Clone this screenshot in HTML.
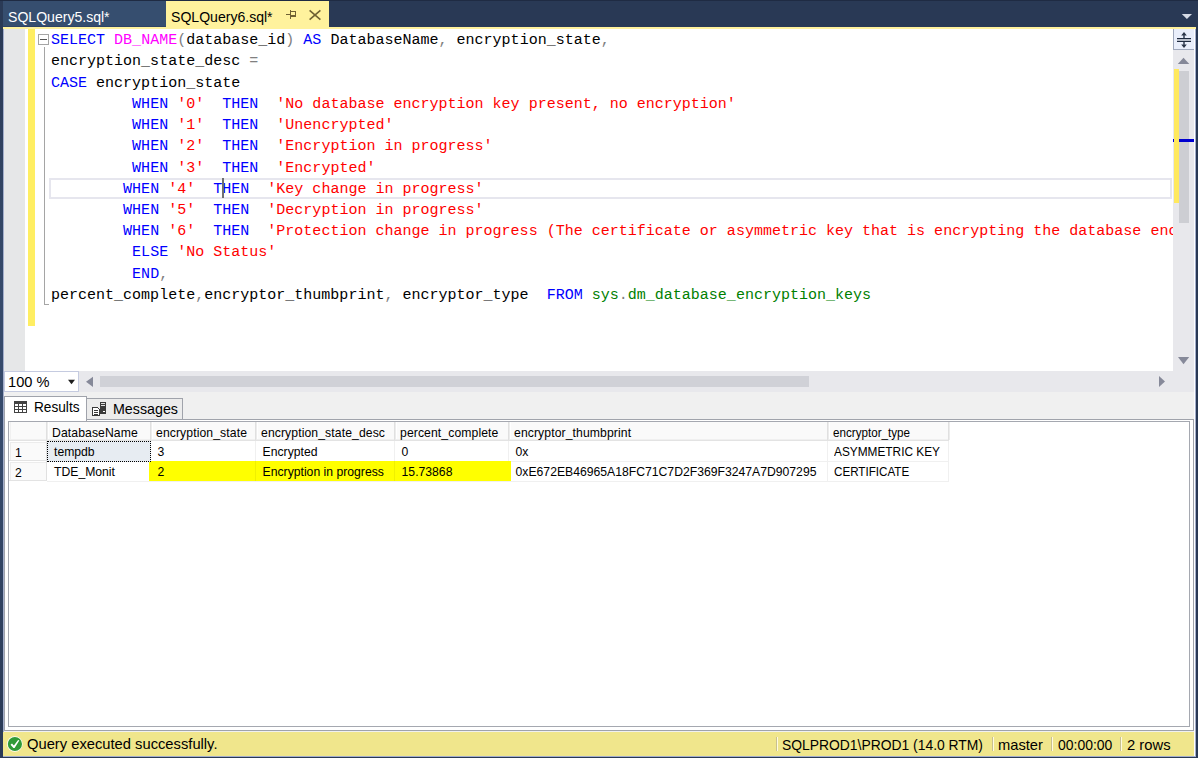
<!DOCTYPE html>
<html><head><meta charset="utf-8">
<style>
*{box-sizing:border-box;margin:0;padding:0}
html,body{width:1198px;height:758px;overflow:hidden;background:#293955;position:relative;font-family:"Liberation Sans",sans-serif}
.a{position:absolute}
.code{position:absolute;left:0;top:0;font-family:"Liberation Mono",monospace;font-size:15.03px;line-height:21.2px;white-space:pre;color:#000}
.k{color:#0000ff}.f{color:#ff00ff}.s{color:#ff0000}.g{color:#808080}.y{color:#008000}
.ui{font-size:15px;line-height:18px;white-space:pre;color:#000;transform-origin:0 0}
.gt{position:absolute;font-size:12.2px;white-space:pre;color:#000;line-height:14px}
</style></head><body>
<!-- tab well -->
<div class="a" style="left:3px;top:1px;width:163px;height:26px;background:#364e6f"></div><div class="a" style="left:3px;top:26px;width:163px;height:1px;background:#2f4364"></div>
<div class="a" style="left:7.6px;top:6.6px;font-size:14.8px;color:#fff;white-space:pre;line-height:20px;transform:scaleX(0.95);transform-origin:0 0">SQLQuery5.sql*</div>
<div class="a" style="left:166px;top:1px;width:163px;height:26px;background:#fff29d"></div>
<div class="a" style="left:170.6px;top:6.6px;font-size:14.8px;color:#000;white-space:pre;line-height:20px;transform:scaleX(0.95);transform-origin:0 0">SQLQuery6.sql*</div>
<div class="a" style="left:3px;top:27px;width:1193px;height:2px;background:#fff29d"></div>
<!-- editor -->
<div class="a" style="left:3px;top:29px;width:1192px;height:342px;background:#fff"></div>
<div class="a" style="left:3px;top:29px;width:22px;height:342px;background:#e6e7e8"></div>
<div class="a" style="left:28px;top:29px;width:7px;height:297px;background:#ffee62"></div>
<!-- code -->
<div class="a" id="codebox" style="left:51px;top:30.1px;width:1122px;height:341px;overflow:hidden">
<div class="code" style="top:0.00px"><span class="k">SELECT</span> <span class="f">DB_NAME</span><span class="g">(</span>database_id<span class="g">)</span> <span class="k">AS</span> DatabaseName<span class="g">,</span> encryption_state<span class="g">,</span></div>
<div class="code" style="top:21.24px">encryption_state_desc <span class="g">=</span></div>
<div class="code" style="top:42.48px"><span class="k">CASE</span> encryption_state</div>
<div class="code" style="top:63.72px">         <span class="k">WHEN</span> <span class="s">'0'</span>  <span class="k">THEN</span>  <span class="s">'No database encryption key present, no encryption'</span></div>
<div class="code" style="top:84.96px">         <span class="k">WHEN</span> <span class="s">'1'</span>  <span class="k">THEN</span>  <span class="s">'Unencrypted'</span></div>
<div class="code" style="top:106.20px">         <span class="k">WHEN</span> <span class="s">'2'</span>  <span class="k">THEN</span>  <span class="s">'Encryption in progress'</span></div>
<div class="code" style="top:127.44px">         <span class="k">WHEN</span> <span class="s">'3'</span>  <span class="k">THEN</span>  <span class="s">'Encrypted'</span></div>
<div class="code" style="top:148.68px">        <span class="k">WHEN</span> <span class="s">'4'</span>  <span class="k">THEN</span>  <span class="s">'Key change in progress'</span></div>
<div class="code" style="top:169.92px">        <span class="k">WHEN</span> <span class="s">'5'</span>  <span class="k">THEN</span>  <span class="s">'Decryption in progress'</span></div>
<div class="code" style="top:191.16px">        <span class="k">WHEN</span> <span class="s">'6'</span>  <span class="k">THEN</span>  <span class="s">'Protection change in progress (The certificate or asymmetric key that is encrypting the database encryption key is being changed.)'</span></div>
<div class="code" style="top:212.40px">         <span class="k">ELSE</span> <span class="s">'No Status'</span></div>
<div class="code" style="top:233.64px">         <span class="k">END</span><span class="g">,</span></div>
<div class="code" style="top:254.88px">percent_complete<span class="g">,</span>encryptor_thumbprint<span class="g">,</span> encryptor_type  <span class="k">FROM</span> <span class="y">sys</span><span class="g">.</span><span class="y">dm_database_encryption_keys</span></div>
</div>
<!-- vertical scrollbar -->
<div class="a" style="left:1173px;top:29px;width:21px;height:342px;background:#e8e8ec"></div>
<div class="a" style="left:1194px;top:29px;width:1px;height:727px;background:#fff"></div>
<!-- h scroll row -->
<div class="a" style="left:3px;top:371px;width:1191px;height:21px;background:#e8e8ec"></div>
<div class="a" style="left:4px;top:371px;width:75px;height:21px;background:#fff;border:1px solid #c5cbe0"></div>
<div class="a ui" style="left:7.5px;top:373px;transform:scaleX(0.975)">100 %</div>
<div class="a" style="left:100px;top:376px;width:709px;height:11px;background:#d0d1d7"></div>
<!-- results -->
<div class="a" style="left:3px;top:392px;width:1191px;height:340px;background:#f0f0f0"></div>
<div class="a" style="left:4px;top:419px;width:1190px;height:312px;background:#fff;border:1px solid #a0a3ab"></div>
<div class="a" style="left:8px;top:421px;width:1182px;height:306px;background:#fff;border:1px solid #a5a8b0"></div>
<!-- status -->
<div class="a" style="left:3px;top:732px;width:1191px;height:24px;background:#f0e68c"></div>
<div class="a ui" style="left:27px;top:734.6px;transform:scaleX(0.982)">Query executed successfully.</div>

<!-- top dark line -->
<div class="a" style="left:0;top:0;width:1198px;height:1px;background:#1f2b43"></div>
<!-- pin & close -->
<svg class="a" style="left:283px;top:6px" width="14" height="14" fill="#6f6133"><rect x="3" y="8" width="4" height="1"/><rect x="7" y="4" width="1" height="9"/><rect x="8" y="5" width="5" height="1"/><rect x="12" y="5" width="1" height="6"/><rect x="8" y="9" width="5" height="2"/></svg>
<svg class="a" style="left:305px;top:6px" width="20" height="18"><path d="M4.6 4.4 L15.4 13.6 M15.4 4.4 L4.6 13.6" stroke="#6f6133" stroke-width="1.6"/></svg>
<!-- tab dropdown -->
<svg class="a" style="left:1180px;top:12px" width="14" height="9"><path d="M1.8 1.9 L12 1.9 L6.9 7.1 Z" fill="#d6dbe6"/></svg>
<!-- light edges -->
<div class="a" style="left:0;top:1px;width:3px;height:756px;background:linear-gradient(#2a3a56 0px,#2a3a56 30px,#2e3e5c 100px,#324564 200px,#364a6b 300px,#364a6b 460px,#2c3c59 700px,#2a3a56 756px)"></div>
<div class="a" style="left:3px;top:29px;width:1px;height:703px;background:#a3aecb"></div>
<div class="a" style="left:1195px;top:29px;width:1px;height:727px;background:#a3aecb"></div>
<div class="a" style="left:3px;top:756px;width:1193px;height:1px;background:#a3aecb"></div>
<!-- outline -->
<div class="a" style="left:38px;top:34px;width:11px;height:11px;border:1px solid #a5a5a5;background:#fff"></div>
<div class="a" style="left:40px;top:39px;width:7px;height:1px;background:#555"></div>
<div class="a" style="left:44px;top:47px;width:1px;height:258px;background:#a5a5a5"></div>
<div class="a" style="left:44px;top:304px;width:5px;height:1px;background:#a5a5a5"></div>
<!-- current line box -->
<div class="a" style="left:49px;top:178px;width:1123px;height:21px;border:2px solid #e6e6ee"></div>
<div class="a" style="left:222px;top:178px;width:2px;height:20px;background:#707070"></div>
<!-- vscroll parts -->
<div class="a" style="left:1173px;top:29px;width:21px;height:21px;background:#e9eefb;border-left:1px solid #9fa8bc;border-bottom:1px solid #9fa8bc"></div>
<svg class="a" style="left:1173px;top:29px" width="21" height="21"><rect x="4" y="9" width="14" height="1" fill="#1e2a40"/><rect x="4" y="10" width="14" height="2" fill="#b6bcc8"/><rect x="4" y="12" width="14" height="1" fill="#1e2a40"/><path d="M11 3 L13.8 6.4 L8.2 6.4 Z M11 19 L13.8 15.6 L8.2 15.6 Z" fill="#2a3548"/><rect x="10.2" y="6" width="1.6" height="3" fill="#3f4a5e"/><rect x="10.2" y="13" width="1.6" height="3" fill="#3f4a5e"/></svg>
<svg class="a" style="left:1173px;top:50px" width="21" height="321"><path d="M4.8 13.9 L16.3 13.9 L10.5 7.7 Z" fill="#868999"/><path d="M5 307 L16.2 307 L10.5 314.2 Z" fill="#868999"/></svg>
<div class="a" style="left:1179px;top:71px;width:10px;height:152px;background:#cdced3"></div>
<div class="a" style="left:1173px;top:139px;width:21px;height:3px;background:#0000d0"></div>
<div class="a" style="left:1174px;top:69px;width:5px;height:134px;background:#ffe95e"></div>

<!-- hscroll arrows -->
<svg class="a" style="left:80px;top:371px" width="20" height="21"><path d="M13 5.7 L13 16 L6 10.8 Z" fill="#868999"/></svg>
<svg class="a" style="left:1155px;top:371px" width="15" height="21"><path d="M4 5 L4 16 L10 10.5 Z" fill="#868999"/></svg>
<svg class="a" style="left:66px;top:378px" width="11" height="8"><path d="M2 1.7 L9 1.7 L5.5 6.2 Z" fill="#1e1e1e"/></svg>
<div class="a" style="left:4px;top:396px;width:83px;height:25px;background:#fff;border:1px solid #a0a3ab;border-bottom:none"></div>
<div class="a" style="left:86px;top:398px;width:97px;height:22px;background:#ececec;border:1px solid #a0a3ab"></div>
<svg class="a" style="left:14px;top:401px" width="14" height="12"><rect x="0" y="0" width="13" height="12" fill="#424242"/><g fill="#fff"><rect x="1" y="3" width="3" height="2"/><rect x="5" y="3" width="3" height="2"/><rect x="9" y="3" width="3" height="2"/><rect x="1" y="6" width="3" height="2"/><rect x="5" y="6" width="3" height="2"/><rect x="9" y="6" width="3" height="2"/><rect x="1" y="9" width="3" height="2"/><rect x="5" y="9" width="3" height="2"/><rect x="9" y="9" width="3" height="2"/></g></svg>
<div class="a ui" style="left:34px;top:398px;transform:scaleX(0.91)">Results</div>
<svg class="a" style="left:91px;top:401px" width="17" height="16" shape-rendering="crispEdges"><rect x="9" y="1" width="6" height="12" fill="#3a3a3a"/><rect x="10" y="2" width="4" height="1" fill="#e0e0e0"/><rect x="10" y="4" width="4" height="1" fill="#e0e0e0"/><rect x="12" y="10" width="2" height="1" fill="#fff"/><path d="M1 6 H6 L9 9 V15 H1 Z" fill="#3a3a3a"/><path d="M2 7 H6 L8 9 V14 H2 Z" fill="#fff"/><rect x="3" y="9" width="4" height="1" fill="#3a3a3a"/><rect x="3" y="11" width="4" height="1" fill="#3a3a3a"/><rect x="3" y="13" width="4" height="1" fill="#3a3a3a"/></svg>
<div class="a ui" style="left:113px;top:400px;transform:scaleX(0.95)">Messages</div>
<div class="a" style="left:9px;top:422px;width:940px;height:19px;background:#fafafa"></div>
<div class="a" style="left:9px;top:439px;width:940px;height:1px;background:#f0f0f0"></div>
<div class="a" style="left:9px;top:440px;width:940px;height:1px;background:#e3e3e3"></div>
<div class="a" style="left:46px;top:422px;width:1px;height:18px;background:#e0e0e0"></div>
<div class="a" style="left:47px;top:422px;width:1px;height:18px;background:#ececec"></div>
<div class="a" style="left:48px;top:422px;width:1px;height:17px;background:#ffffff"></div>
<div class="a" style="left:150px;top:422px;width:1px;height:18px;background:#e0e0e0"></div>
<div class="a" style="left:151px;top:422px;width:1px;height:18px;background:#ececec"></div>
<div class="a" style="left:152px;top:422px;width:1px;height:17px;background:#ffffff"></div>
<div class="a" style="left:255px;top:422px;width:1px;height:18px;background:#e0e0e0"></div>
<div class="a" style="left:256px;top:422px;width:1px;height:18px;background:#ececec"></div>
<div class="a" style="left:257px;top:422px;width:1px;height:17px;background:#ffffff"></div>
<div class="a" style="left:394px;top:422px;width:1px;height:18px;background:#e0e0e0"></div>
<div class="a" style="left:395px;top:422px;width:1px;height:18px;background:#ececec"></div>
<div class="a" style="left:396px;top:422px;width:1px;height:17px;background:#ffffff"></div>
<div class="a" style="left:508px;top:422px;width:1px;height:18px;background:#e0e0e0"></div>
<div class="a" style="left:509px;top:422px;width:1px;height:18px;background:#ececec"></div>
<div class="a" style="left:510px;top:422px;width:1px;height:17px;background:#ffffff"></div>
<div class="a" style="left:827px;top:422px;width:1px;height:18px;background:#e0e0e0"></div>
<div class="a" style="left:828px;top:422px;width:1px;height:18px;background:#ececec"></div>
<div class="a" style="left:829px;top:422px;width:1px;height:17px;background:#ffffff"></div>
<div class="a" style="left:948px;top:422px;width:1px;height:18px;background:#e0e0e0"></div>
<div class="a" style="left:949px;top:422px;width:1px;height:18px;background:#ececec"></div>
<div class="a" style="left:10px;top:422px;width:1px;height:17px;background:#f0f0f0"></div>
<div class="gt" style="left:52px;top:426px;letter-spacing:0.1px">DatabaseName</div>
<div class="gt" style="left:156px;top:426px;letter-spacing:0.1px">encryption_state</div>
<div class="gt" style="left:261px;top:426px;letter-spacing:0.1px">encryption_state_desc</div>
<div class="gt" style="left:400px;top:426px;letter-spacing:0.1px">percent_complete</div>
<div class="gt" style="left:514px;top:426px;letter-spacing:0.1px">encryptor_thumbprint</div>
<div class="gt" style="left:833px;top:426px;transform:scaleX(0.955);transform-origin:0 0">encryptor_type</div>
<div class="a" style="left:9px;top:441px;width:38px;height:20px;background:#ffffff"></div>
<div class="a" style="left:10px;top:442px;width:36px;height:19px;background:#fafafa"></div>
<div class="a" style="left:10px;top:442px;width:36px;height:1px;background:#ececec"></div>
<div class="a" style="left:10px;top:442px;width:1px;height:19px;background:#ececec"></div>
<div class="a" style="left:46px;top:441px;width:1px;height:20px;background:#e0e0e0"></div>
<div class="a" style="left:9px;top:460px;width:38px;height:1px;background:#e3e3e3"></div>
<div class="gt" style="left:15px;top:446px">1</div>
<div class="a" style="left:47px;top:461px;width:902px;height:1px;background:#f0f0f0"></div>
<div class="a" style="left:150px;top:441px;width:1px;height:20px;background:#f0f0f0"></div>
<div class="a" style="left:255px;top:441px;width:1px;height:20px;background:#f0f0f0"></div>
<div class="a" style="left:394px;top:441px;width:1px;height:20px;background:#f0f0f0"></div>
<div class="a" style="left:508px;top:441px;width:1px;height:20px;background:#f0f0f0"></div>
<div class="a" style="left:827px;top:441px;width:1px;height:20px;background:#f0f0f0"></div>
<div class="a" style="left:948px;top:441px;width:1px;height:20px;background:#f0f0f0"></div>
<div class="a" style="left:9px;top:461px;width:38px;height:20px;background:#ffffff"></div>
<div class="a" style="left:10px;top:462px;width:36px;height:19px;background:#fafafa"></div>
<div class="a" style="left:10px;top:462px;width:36px;height:1px;background:#ececec"></div>
<div class="a" style="left:10px;top:462px;width:1px;height:19px;background:#ececec"></div>
<div class="a" style="left:46px;top:461px;width:1px;height:20px;background:#e0e0e0"></div>
<div class="a" style="left:9px;top:480px;width:38px;height:1px;background:#e3e3e3"></div>
<div class="gt" style="left:15px;top:466px">2</div>
<div class="a" style="left:47px;top:481px;width:902px;height:1px;background:#f0f0f0"></div>
<div class="a" style="left:150px;top:461px;width:1px;height:20px;background:#f0f0f0"></div>
<div class="a" style="left:255px;top:461px;width:1px;height:20px;background:#f0f0f0"></div>
<div class="a" style="left:394px;top:461px;width:1px;height:20px;background:#f0f0f0"></div>
<div class="a" style="left:508px;top:461px;width:1px;height:20px;background:#f0f0f0"></div>
<div class="a" style="left:827px;top:461px;width:1px;height:20px;background:#f0f0f0"></div>
<div class="a" style="left:948px;top:461px;width:1px;height:20px;background:#f0f0f0"></div>
<div class="a" style="left:149px;top:461px;width:362px;height:20px;background:#ffff00"></div><div class="a" style="left:255px;top:461px;width:1px;height:20px;background:#f0f000"></div><div class="a" style="left:394px;top:461px;width:1px;height:20px;background:#f0f000"></div>
<div class="a" style="left:47px;top:441px;width:104px;height:21px;background:#e7ecf2;border:1px dotted #000"></div>
<div class="gt" style="left:54px;top:445px">tempdb</div>
<div class="gt" style="left:157.6px;top:445px">3</div>
<div class="gt" style="left:262.6px;top:445px">Encrypted</div>
<div class="gt" style="left:401.6px;top:445px">0</div>
<div class="gt" style="left:515.6px;top:445px">0x</div>
<div class="gt" style="left:834px;top:445px;transform:scaleX(0.972);transform-origin:0 0">ASYMMETRIC KEY</div>
<div class="gt" style="left:54px;top:465px">TDE_Monit</div>
<div class="gt" style="left:157.6px;top:465px">2</div>
<div class="gt" style="left:262.6px;top:465px">Encryption in progress</div>
<div class="gt" style="left:401.6px;top:465px">15.73868</div>
<div class="gt" style="left:515.6px;top:465px">0xE672EB46965A18FC71C7D2F369F3247A7D907295</div>
<div class="gt" style="left:834px;top:465px;transform:scaleX(0.955);transform-origin:0 0">CERTIFICATE</div>
<svg class="a" style="left:6px;top:735px" width="18" height="18"><circle cx="8.8" cy="9" r="7.8" fill="#fff"/><circle cx="8.9" cy="9" r="7.1" fill="#2f9a37"/><path d="M4.5 9.8 L6 8.6 L7.9 10.4 L12.1 4.9 L13.3 5.6 L8.6 13 L7.4 13 Z" fill="#fff"/></svg>
<div class="a" style="left:776px;top:737px;width:1px;height:14px;background:#c8c090"></div><div class="a" style="left:777px;top:737px;width:1px;height:14px;background:#fffbe0"></div>
<div class="a" style="left:1051px;top:737px;width:1px;height:14px;background:#c8c090"></div><div class="a" style="left:1052px;top:737px;width:1px;height:14px;background:#fffbe0"></div>
<div class="a" style="left:1120px;top:737px;width:1px;height:14px;background:#c8c090"></div><div class="a" style="left:1121px;top:737px;width:1px;height:14px;background:#fffbe0"></div>
<div class="a" style="left:992px;top:737px;width:1px;height:14px;background:#c8c090"></div><div class="a" style="left:993px;top:737px;width:1px;height:14px;background:#fffbe0"></div>
<div class="a ui" style="left:782px;top:735.6px;transform:scaleX(0.925)">SQLPROD1\PROD1 (14.0 RTM)</div>
<div class="a ui" style="left:998px;top:735.6px;transform:scaleX(0.98)">master</div>
<div class="a ui" style="left:1058px;top:735.6px;transform:scaleX(0.93)">00:00:00</div>
<div class="a ui" style="left:1127px;top:735.6px;transform:scaleX(0.985)">2 rows</div>
</body></html>
